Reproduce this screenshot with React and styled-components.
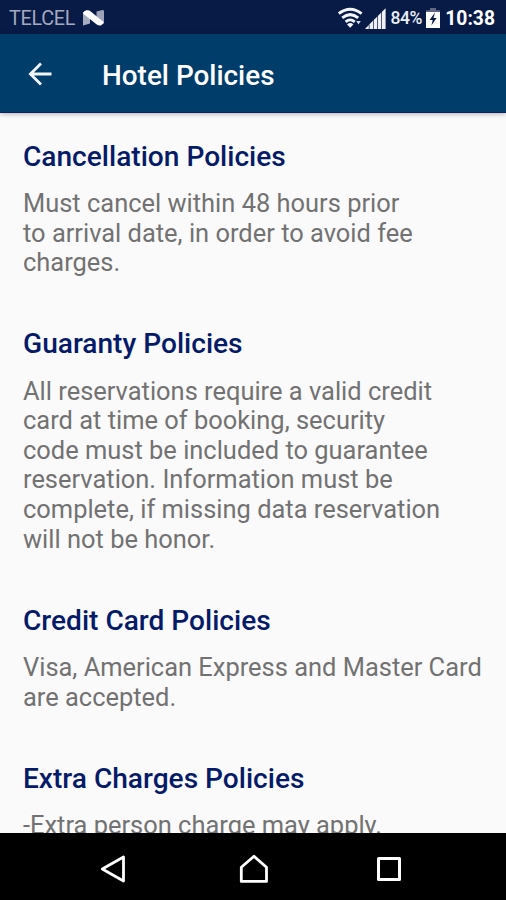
import React from 'react';
import styled, { createGlobalStyle } from 'styled-components';

const policies = [
  {
    title: 'Cancellation Policies',
    lines: [
      'Must cancel within 48 hours prior',
      'to arrival date, in order to avoid fee',
      'charges.',
    ],
  },
  {
    title: 'Guaranty Policies',
    lines: [
      'All reservations require a valid credit',
      'card at time of booking, security',
      'code must be included to guarantee',
      'reservation. Information must be',
      'complete, if missing data reservation',
      'will not be honor.',
    ],
  },
  {
    title: 'Credit Card Policies',
    lines: [
      'Visa, American Express and Master Card',
      'are accepted.',
    ],
  },
  {
    title: 'Extra Charges Policies',
    lines: ['-Extra person charge may apply.'],
  },
];

function WifiIcon() {
  return (
    <svg width="25" height="22" viewBox="0 0 25 22" fill="none" stroke="#f4f5fa">
      <path d="M0.8 6.6Q12.2 -2.2 23.6 6.6" strokeWidth="3" />
      <path d="M4.2 10.8Q12.2 4.4 20.2 10.8" strokeWidth="3" />
      <path d="M7.6 14.8Q12.2 11 16.8 14.8" strokeWidth="2.8" />
      <path d="M9 17.4Q12.2 14.6 15.4 17.4L12.2 20.8Z" fill="#f4f5fa" stroke="none" />
      <path d="M18.2 14h4.6l-2.3 3.6z" fill="#d5d8e5" stroke="none" />
    </svg>
  );
}

function SignalIcon() {
  return (
    <svg width="21" height="21" viewBox="0 0 21 21" fill="#f0f1f7">
      <path d="M0 21L3.8 17V21Z" />
      <path d="M4.5 16.3L8 12.8V21H4.5Z" />
      <path d="M8.7 12.1L12.1 8.7V21H8.7Z" />
      <path d="M12.8 8L16.1 4.7V21H12.8Z" />
      <path d="M16.8 4L20.6 0.2V21H16.8Z" />
    </svg>
  );
}

function BatteryIcon() {
  return (
    <svg width="14" height="20" viewBox="0 0 14 20">
      <path d="M4 0h6v2.2h4v2.3H0V2.2h4z" fill="#5f6785" />
      <path d="M0 4h14v16H0z" fill="#fff" />
      <path d="M9 4.5L3.6 12h3.1L5.4 17.6 10.6 10H7.5z" fill="#0a1b46" />
    </svg>
  );
}

function NougatIcon() {
  return (
    <svg width="21" height="16" viewBox="0 0 21 16">
      <path d="M0 2h7v11.5L0 15.4z" fill="#a7adc1" />
      <path d="M13.5 1.6L19.5 0.1Q21 0 21 1.4v12L13.5 13z" fill="#9ca3b9" />
      <path d="M0 3.4Q0.8 0.6 3.4 0.3Q5.8 -0.2 7.8 1.4L20.8 12.2Q20 14.8 17.8 15.4Q15.6 15.9 13.4 14.2z" fill="#fff" />
    </svg>
  );
}

function App() {
  return (
    <>
      <GlobalStyle />
      <Screen>
        <StatusBar>
          <Carrier>TELCEL</Carrier>
          <NougatIcon />
          <StatusIcons>
            <WifiIcon />
            <SignalIcon />
            <Percent>84%</Percent>
            <BatteryIcon />
            <Clock>10:38</Clock>
          </StatusIcons>
        </StatusBar>
        <Toolbar>
          <BackButton aria-label="Back">
            <svg width="24" height="24" viewBox="0 0 24 24" fill="none" stroke="#f2f5fa" strokeWidth="2.8">
              <path d="M23.5 12H2.5M13 1.4L2.4 12L13 22.6" />
            </svg>
          </BackButton>
          <ToolbarTitle>Hotel Policies</ToolbarTitle>
        </Toolbar>
        <Content>
          {policies.map(policy =>
            <Policy key={policy.title}>
              <PolicyTitle>{policy.title}</PolicyTitle>
              <PolicyText>
                {policy.lines.map(line => <Line key={line}>{line}</Line>)}
              </PolicyText>
            </Policy>
          )}
        </Content>
        <NavBar>
          <NavButton aria-label="Back">
            <svg width="28" height="30" viewBox="0 0 28 30" fill="none" stroke="#fff" strokeWidth="2.8" strokeLinejoin="round">
              <path d="M24.5 3V27L3.3 15Z" />
            </svg>
          </NavButton>
          <NavButton aria-label="Home">
            <svg width="30" height="30" viewBox="0 0 30 30" fill="none" stroke="#fff" strokeWidth="2.8" strokeLinejoin="round">
              <path d="M2.3 27.4V13.2L15 2.3L27.5 13.2V27.4Z" />
            </svg>
          </NavButton>
          <NavButton aria-label="Recent apps">
            <svg width="26" height="26" viewBox="0 0 26 26" fill="none" stroke="#fff" strokeWidth="3" strokeLinejoin="round">
              <path d="M2.5 2.5H23.5V23.5H2.5Z" />
            </svg>
          </NavButton>
        </NavBar>
      </Screen>
    </>
  );
}

export default App;

const GlobalStyle = createGlobalStyle`
  body {
    margin: 0;
    background-color: #fafafa;
    font-family: Roboto, "Liberation Sans", sans-serif;
  }
`;

const Screen = styled.div`
  display: flex;
  flex-direction: column;
  width: 506px;
  height: 900px;
  overflow: hidden;
`;

const StatusBar = styled.header`
  display: flex;
  flex: none;
  align-items: center;
  box-sizing: border-box;
  height: 34px;
  padding: 2px 11px 0 9px;
  background-color: #081b46;
`;

const Carrier = styled.span`
  width: 67px;
  margin: 2px 7px 0 0;
  color: #a3a9be;
  font-size: 19.8px;
  line-height: 30px;
  letter-spacing: -0.3px;
  white-space: nowrap;
`;

const StatusIcons = styled.div`
  display: flex;
  align-items: center;
  margin-left: auto;

  svg + svg {
    margin-left: 2px;
  }
`;

const Percent = styled.span`
  margin: 0 4px 0 5px;
  color: #eceef5;
  font-size: 17.5px;
  font-weight: 500;
  letter-spacing: -0.5px;
  line-height: 32px;
`;

const Clock = styled.span`
  margin: 2px 0 0 5.5px;
  color: #fff;
  font-size: 19.3px;
  font-weight: 700;
  line-height: 30px;
`;

const Toolbar = styled.div`
  display: flex;
  flex: none;
  align-items: center;
  box-sizing: border-box;
  height: 79px;
  padding: 1px 28px 0;
  border-bottom: 1px solid #10205a;
  background-color: #003d6b;
  box-shadow: 0 1px 5px rgba(0, 0, 0, 0.3);
  z-index: 1;
`;

const BackButton = styled.button`
  all: unset;
  display: flex;
  width: 74px;
  &:hover {
    cursor: pointer;
  }
`;

const ToolbarTitle = styled.h1`
  margin: 5px 0 0;
  color: #fff;
  font-size: 27.9px;
  font-weight: 500;
  line-height: 32px;
`;

const Content = styled.main`
  flex: 1;
  min-height: 0;
  padding: 27.7px 0 0 23px;
  overflow: hidden;
  background-color: #fafafa;
`;

const Policy = styled.section`
  margin-bottom: 50.5px;
`;

const PolicyTitle = styled.h2`
  margin: 0 0 16.3px;
  color: #051a68;
  font-size: 28.1px;
  font-weight: 500;
  line-height: 32px;
`;

const PolicyText = styled.p`
  margin: 0;
  color: #727272;
  font-size: 25.45px;
  line-height: 29.6px;
`;

const Line = styled.span`
  display: block;
  white-space: nowrap;
`;

const NavBar = styled.nav`
  display: grid;
  flex: none;
  grid-template-columns: 45px 136px 145px 125px;
  align-items: center;
  box-sizing: border-box;
  height: 67px;
  padding-top: 4px;
  background-color: #000;

  button:first-child {
    grid-column: 2;
  }
`;

const NavButton = styled.button`
  all: unset;
  display: flex;
  justify-content: center;
  &:hover {
    cursor: pointer;
  }
`;
